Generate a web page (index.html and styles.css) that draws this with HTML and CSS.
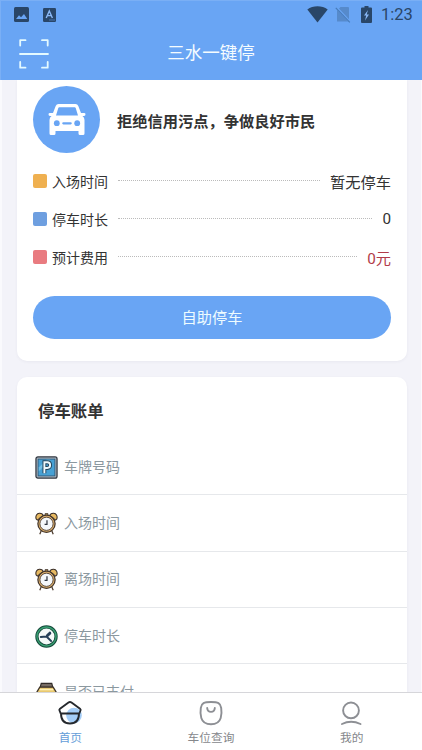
FILE: index.html
```
<!DOCTYPE html>
<html lang="zh-CN">
<head>
<meta charset="utf-8">
<title>三水一键停</title>
<link rel="stylesheet" href="styles.css">
</head>
<body>
<svg class="defs" width="0" height="0">
  <symbol id="alarm" viewBox="0 0 24 24">
    <path d="M6.500 19.500 5 23.300M17.500 19.500 19 23.300" stroke="#4b3a2c" stroke-width="1.300" fill="none"/>
    <path d="M1.200 7.200C.2 4 2 1.500 4.500 1.300 6.500 1.100 8 2.200 8.700 3.500L2.500 8.400ZM22.800 7.200C23.800 4 22 1.500 19.500 1.300 17.500 1.100 16 2.200 15.300 3.500L21.500 8.400Z" fill="#e7b961" stroke="#392e28" stroke-width="1.100"/>
    <path d="M10.500 3.500V1.800h3v1.700" fill="#e7b961" stroke="#392e28"/>
    <circle cx="12" cy="12.300" r="9" fill="#e1b36d" stroke="#41342b" stroke-width="1.300"/>
    <circle cx="12" cy="12.300" r="6.900" fill="#f5f8fb" stroke="#55453a" stroke-width="1"/>
    <path d="M12.500 8.500v4.300h-2.500" fill="none" stroke="#303641" stroke-width="1.300"/>
  </symbol>
</svg>
<div class="app">
  <header class="header">
    <div class="status">
      <svg class="st-img" width="15" height="15" viewBox="0 0 15 15"><rect width="15" height="15" rx="1.500" fill="#294668"/><path d="M2 12 5 8.300l2 2L10 7l3.300 5Z" fill="#69a5f4"/></svg>
      <svg class="st-a" width="13" height="14" viewBox="0 0 13 14"><rect width="13" height="14" rx="1.200" fill="#294668"/><path d="m3.200 10 3.100-7 3.100 7M4.300 7.600h4" fill="none" stroke="#8ab8f5" stroke-width="1.400"/><path d="M6.500 12h5" stroke="#69a5f4" stroke-dasharray="1 1"/></svg>
      <svg class="st-wifi" width="21" height="17" viewBox="0 0 21 17"><path d="M.3 3.500C6-.8 15-.8 20.700 3.500L10.500 16.500Z" fill="#294668"/></svg>
      <svg class="st-sim" width="16" height="17" viewBox="0 0 16 17"><path d="M5.500 1H13q1 0 1 1v13.500H2V4.500Z" fill="#568acb"/><path d="m1 1 14 15" stroke="#69a5f4" stroke-width="2.400"/><path d="m.8 1.800 14 14.500" stroke="#477bb9" stroke-width="1.200"/></svg>
      <svg class="st-bat" width="11" height="17" viewBox="0 0 11 17"><path d="M3.500 0h4v1.500H10q1 0 1 1V16q0 1-1 1H1q-1 0-1-1V2.500q0-1 1-1h2.500Z" fill="#294668"/><path d="M7 4 3 9.500h2.200L4 14.500 8 8.500H5.700Z" fill="#8ab8f5"/></svg>
      <span class="clock">1:23</span>
    </div>
    <div class="titlebar">
      <svg class="scan" width="30" height="30" viewBox="0 0 30 30" fill="none" stroke="#e4faff" stroke-width="1.800" stroke-linecap="round" stroke-linejoin="round"><path d="M1.200 6.500V1.200H6.500M23 1.200h5.700v5.300M28.700 23v5.700H23M6.500 28.700H1.200V23M1 15h28"/></svg>
      <h1>三水一键停</h1>
    </div>
  </header>
  <main class="content">
    <section class="card summary">
      <div class="hero">
        <div class="avatar">
          <svg width="38" height="34" viewBox="0 0 38 34"><path fill="#fff" fill-rule="evenodd" d="M10.500 1h17q2 0 2.800 2l2.700 7h3q1.500 0 1.500 1.300 0 1.700-1.500 1.700h-1.500q2 1.500 2 4v13.500q0 1.500-1.500 1.500h-3q-1.500 0-1.500-1.500V28h-23v2.500Q7.500 32 6 32H3q-1.500 0-1.500-1.500V17q0-2.500 2-4H2Q.5 13 .5 11.300.5 10 2 10h3l2.700-7q.8-2 2.800-2Zm.7 3.200q-.6 0-.9.800L8 12.500h22L27.700 5q-.3-.8-.9-.8Z"/><circle cx="8.800" cy="20.200" r="2.900" fill="#69a5f4"/><circle cx="29.200" cy="20.200" r="2.900" fill="#69a5f4"/><path d="M15.300 20.300h7.400" stroke="#69a5f4" stroke-width="2.200" stroke-linecap="round"/></svg>
        </div>
        <strong>拒绝信用污点，争做良好市民</strong>
      </div>
      <div class="stat"><i class="mark orange"></i><span>入场时间</span><i class="dots"></i><b>暂无停车</b></div>
      <div class="stat"><i class="mark blue"></i><span>停车时长</span><i class="dots"></i><b>0</b></div>
      <div class="stat"><i class="mark red"></i><span>预计费用</span><i class="dots"></i><b class="fee">0元</b></div>
      <button class="cta">自助停车</button>
    </section>
    <section class="card bill">
      <h2>停车账单</h2>
      <ul>
        <li>
          <svg width="23" height="23" viewBox="0 0 24 24"><rect x="1" y="1" width="22" height="22" rx="2" fill="#a8b4c0" stroke="#30363f" stroke-width="1.300"/><rect x="3.200" y="3.200" width="17.600" height="17.600" fill="#47a1d5" stroke="#28516e" stroke-width=".8"/><path d="M4 12 12 4h4L4 16Z" fill="#72bfe5"/><path d="M9.800 18V6.500h3q3 0 3 3t-3 3h-3" fill="none" stroke="#24445c" stroke-width="4"/><path d="M9.800 18V6.500h3q3 0 3 3t-3 3h-3" fill="none" stroke="#edf8fc" stroke-width="2"/></svg>
          <span>车牌号码</span></li>
        <li><svg width="23" height="23"><use href="#alarm"/></svg><span>入场时间</span></li>
        <li><svg width="23" height="23"><use href="#alarm"/></svg><span>离场时间</span></li>
        <li>
          <svg width="23" height="23" viewBox="0 0 24 24"><circle cx="12" cy="12" r="10" fill="#f4faf9" stroke="#174c3d" stroke-width="3.400"/><circle cx="12" cy="12" r="10" fill="none" stroke="#389f72" stroke-width="1.500"/><path d="m6 12.500 6-.5M12 12l3.700-3.800M12 12l4.800 4.700" fill="none" stroke="#26415a" stroke-width="2" stroke-linecap="round"/><path d="m13 11 2.500-2.500" stroke="#26415a" stroke-width="3" stroke-linecap="round"/></svg>
          <span>停车时长</span></li>
        <li>
          <svg width="23" height="23" viewBox="0 0 24 24"><path d="M6.500 2.500h11l1 4h-13Z" fill="#776c64" stroke="#312b28" stroke-width="1.200"/><path d="M5 6.500h14l3 5V22H2V11.500Z" fill="#e9c96f" stroke="#3c3228" stroke-width="1.300"/><path d="M5 9h14" stroke="#fff0b7" stroke-width="1.500"/></svg>
          <span>是否已支付</span></li>
      </ul>
    </section>
  </main>
  <nav class="tabs">
    <a class="tab active"><svg width="26" height="26" viewBox="0 0 26 26"><circle cx="17" cy="15.500" r="7.800" fill="#a4cdf7"/><g fill="none" stroke="#25282d" stroke-width="1.900" stroke-linejoin="round" stroke-linecap="round"><path d="M11.500 2.500q1.500-1 3 0L23 8.700q1 .8.500 1.800l-1.200 3H3.700l-1.200-3Q2 9.500 3 8.700ZM4 13.500C4 20 7 23.500 13 23.500s9-3.500 9-10"/></g></svg><span>首页</span></a>
    <a class="tab"><svg width="26" height="26" viewBox="0 0 26 26" fill="none" stroke="#8d8f94" stroke-width="1.900" stroke-linecap="round"><path d="M13 2C20 2 22.500 3 23.200 8c.6 4 .4 7-.5 10-1.200 4-4 6.300-9.700 6.300S4.500 22 3.300 18c-.9-3-1.100-6-.5-10C3.500 3 6 2 13 2Z"/><path d="M9.200 8C9.500 13.200 16.500 13.200 16.800 8"/></svg><span>车位查询</span></a>
    <a class="tab"><svg width="26" height="26" viewBox="0 0 26 26" fill="none" stroke="#8d8f94" stroke-width="1.900" stroke-linecap="round"><circle cx="12" cy="10.400" r="7.900"/><path d="M3 24Q12 19.500 21.500 24"/></svg><span>我的</span></a>
  </nav>
</div>
</body>
</html>
```
FILE: styles.css
```
* { box-sizing: border-box; }
body { margin: 0; font-family: Roboto, "Noto Sans CJK SC", sans-serif; color: #333; }
h1, h2, ul { margin: 0; padding: 0; }
i { display: block; }
svg { display: block; flex: none; }
.defs { position: absolute; }
.app { width: 422px; height: 750px; display: flex; flex-direction: column; overflow: hidden; background: #fff; }

.header { height: 80px; flex: none; background: #69a5f4; border-top: 1px solid #7aaff5; border-left: 1px solid #7aaff5; }
.status { height: 27px; display: flex; align-items: center; padding: 0 9px 0 13px; }
.st-a { margin-left: 14px; }
.st-wifi { margin-left: auto; }
.st-sim { margin-left: 7px; }
.st-bat { margin-left: 10px; }
.clock { margin-left: 9px; width: 32px; font-size: 16.500px; line-height: 28px; color: #294668; white-space: nowrap; }
.titlebar { height: 52px; display: grid; grid-template-columns: 1fr auto 1fr; align-items: center; padding-left: 18px; padding-right: 19px; }
.titlebar h1 { margin-bottom: 2px; font-size: 17.500px; font-weight: 400; line-height: 26px; color: #f5fcff; }

.content { flex: 1; min-height: 0; overflow: hidden; background: #f3f3f9; padding: 0 14px 0 15px; border-left: 2px solid #fafafd; border-right: 1px solid #fafafd; }
.card { background: #fff; border-radius: 10px; box-shadow: 0 1px 3px rgba(60, 60, 100, .06); }
.summary { height: 281px; padding: 6px 16px 0; border-radius: 0 0 10px 10px; }
.hero { display: flex; align-items: center; height: 67px; margin-bottom: 9px; }
.avatar { width: 67px; height: 67px; border-radius: 50%; background: #69a5f4; display: flex; align-items: center; justify-content: center; }
.hero strong { margin: 4px 0 0 17px; font-size: 15.250px; font-weight: 700; line-height: 24px; color: #333; white-space: nowrap; }
.stat { display: flex; align-items: center; height: 38px; font-size: 14px; }
.stat span { margin-bottom: 1px; }
.mark { width: 14px; height: 14px; border-radius: 2px; margin-right: 5px; }
.orange { background: #efb050; }
.blue { background: #6e9fe0; }
.red { background: #e97b80; }
.dots { flex: 1; border-top: 1px dotted #bbb; margin: 0 10px 1px; }
.stat b { margin-bottom: 1px; font-size: 15.250px; font-weight: 400; }
.stat .fee { color: #b23b49; }
.cta { display: block; width: 100%; height: 43px; margin-top: 20px; padding: 1px 0 0; border: 0; border-radius: 22px; background: #69a5f4; color: #eefcff; font: inherit; font-size: 15.250px; line-height: 42px; }

.bill { margin-top: 16px; height: 420px; }
.bill h2 { height: 62px; padding: 22px 21px 0; font-size: 16.400px; line-height: 25px; font-weight: 700; color: #333; }
.bill ul { list-style: none; }
.bill li { height: 56.300px; display: flex; align-items: center; gap: 6px; padding: 1px 0 0 18px; border-bottom: 1px solid #e6e8eb; font-size: 14px; color: #8b989f; }
.bill li span { margin-bottom: 3px; }

.tabs { height: 58px; flex: none; display: grid; grid-template-columns: repeat(3, 1fr); border-top: 1px solid #d6d6da; background: #fff; }
.tab { display: flex; flex-direction: column; align-items: center; padding-top: 7px; font-size: 11.700px; line-height: 18px; color: #85878b; }
.tab span { margin-top: 3px; }
.active { color: #649dd8; }
```
